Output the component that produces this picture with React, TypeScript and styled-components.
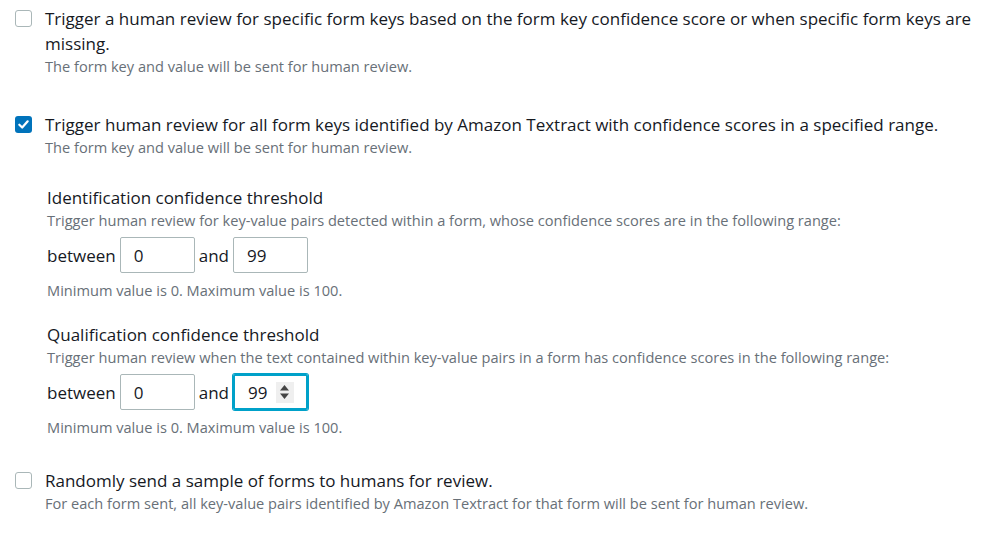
import React from "react";
import styled, { createGlobalStyle } from "styled-components";

const GlobalStyle = createGlobalStyle`
  body {
    margin: 0;
    background: #ffffff;
    font-family: "Open Sans", "Noto Sans", sans-serif;
    color: #16191f;
  }
`;

const Page = styled.div`
  padding: 6px 15px 0 15px;
  width: 963px;
`;

const Option = styled.div`
  display: grid;
  grid-template-columns: 17px 1fr;
  column-gap: 13px;
  margin-bottom: 36px;
`;

const Box = styled.span<{ checked?: boolean }>`
  display: flex;
  align-items: center;
  justify-content: center;
  box-sizing: border-box;
  width: 17px;
  height: 17px;
  margin-top: 4px;
  border-radius: 3px;
  border: ${(p) => (p.checked ? "none" : "1.5px solid #aab7b8")};
  background: ${(p) => (p.checked ? "#0073bb" : "#ffffff")};
`;

const Label = styled.div`
  font-size: 17px;
  line-height: 25px;
  color: #16191f;
`;

const Description = styled.div`
  font-size: 14.6px;
  line-height: 20px;
  color: #687078;
`;

const Thresholds = styled.div`
  display: flex;
  flex-direction: column;
  gap: 23px;
  padding-left: 32px;
  margin-top: -7px;
  margin-bottom: 31px;
`;

const Heading = styled.div`
  font-size: 17px;
  line-height: 24px;
  color: #16191f;
`;

const RangeRow = styled.div`
  display: flex;
  align-items: center;
  gap: 4px;
  height: 36px;
  margin: 7px 0 7px;
  font-size: 17px;
`;

const NumberBox = styled.div<{ focused?: boolean }>`
  display: flex;
  align-items: center;
  justify-content: space-between;
  box-sizing: border-box;
  width: 75px;
  height: 36px;
  padding: 0 13px;
  border: 1px solid #aab7b8;
  border-radius: 2px;
  font-size: 17px;
  color: #16191f;
  ${(p) =>
    p.focused &&
    `
    border: 2px solid #00a1c9;
    box-shadow: 0 0 0 1px #00a1c9;
    padding: 0 12px 0 13px;
  `}
`;

const Spinner = styled.span`
  display: flex;
  flex-direction: column;
  align-items: center;
  justify-content: center;
  gap: 2px;
  width: 18px;
  height: 21px;
  background: #efefef;
`;

const Check = () => (
  <svg width="13" height="13" viewBox="0 0 14 14">
    <path d="M2.5 7.2 L5.6 10.2 L11.5 3.6" fill="none" stroke="#fff" strokeWidth="2.4" strokeLinecap="round" strokeLinejoin="round" />
  </svg>
);

const Arrows = () => (
  <Spinner>
    <svg width="9" height="6" viewBox="0 0 9 6">
      <path d="M4.5 0 L9 5.5 L0 5.5 Z" fill="#444" />
    </svg>
    <svg width="9" height="6" viewBox="0 0 9 6">
      <path d="M0 0.5 L9 0.5 L4.5 6 Z" fill="#444" />
    </svg>
  </Spinner>
);

type ThresholdProps = { title: string; text: string; focused?: boolean };

const ThresholdBlock = ({ title, text, focused }: ThresholdProps) => (
  <div>
    <Heading>{title}</Heading>
    <Description>{text}</Description>
    <RangeRow>
      <span>between</span>
      <NumberBox>0</NumberBox>
      <span>and</span>
      <NumberBox focused={focused}>
        <span>99</span>
        {focused && <Arrows />}
      </NumberBox>
    </RangeRow>
    <Description>Minimum value is 0. Maximum value is 100.</Description>
  </div>
);

export default function App() {
  return (
    <>
      <GlobalStyle />
      <Page>
        <Option>
          <Box />
          <div>
            <Label>
              Trigger a human review for specific form keys based on the form key confidence score or when specific form keys are missing.
            </Label>
            <Description>The form key and value will be sent for human review.</Description>
          </div>
        </Option>
        <Option>
          <Box checked>
            <Check />
          </Box>
          <div>
            <Label>
              Trigger human review for all form keys identified by Amazon Textract with confidence scores in a specified range.
            </Label>
            <Description>The form key and value will be sent for human review.</Description>
          </div>
        </Option>
        <Thresholds>
          <ThresholdBlock
            title="Identification confidence threshold"
            text="Trigger human review for key-value pairs detected within a form, whose confidence scores are in the following range:"
          />
          <ThresholdBlock
            title="Qualification confidence threshold"
            text="Trigger human review when the text contained within key-value pairs in a form has confidence scores in the following range:"
            focused
          />
        </Thresholds>
        <Option>
          <Box />
          <div>
            <Label>Randomly send a sample of forms to humans for review.</Label>
            <Description>
              For each form sent, all key-value pairs identified by Amazon Textract for that form will be sent for human review.
            </Description>
          </div>
        </Option>
      </Page>
    </>
  );
}
